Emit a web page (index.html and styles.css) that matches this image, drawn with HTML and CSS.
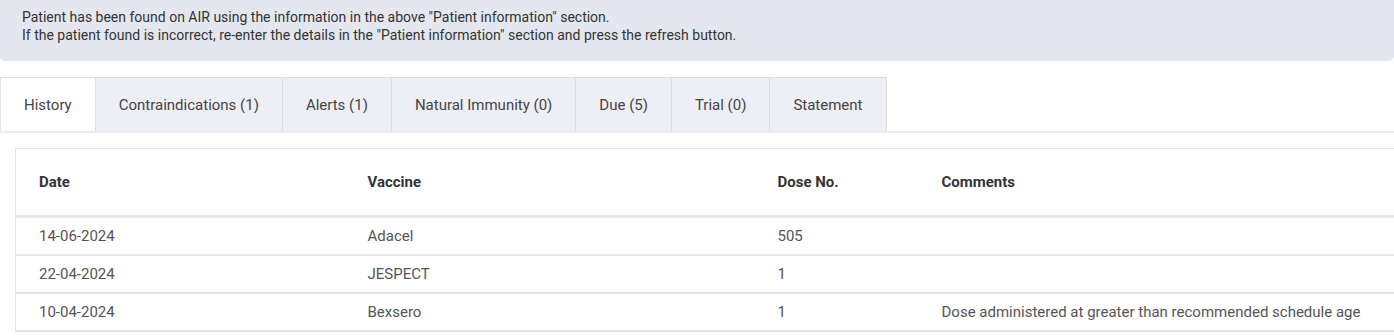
FILE: index.html
```html
<!DOCTYPE html>
<html lang="en">
<head>
<meta charset="UTF-8" />
<meta name="viewport" content="width=device-width, initial-scale=1" />
<title>AIR - Immunisation History</title>
<link rel="stylesheet" href="styles.css">
</head>
<body>
  <div class="notice" role="status">
    <p>Patient has been found on AIR using the information in the above "Patient information" section.</p>
    <p>If the patient found is incorrect, re-enter the details in the "Patient information" section and press the refresh button.</p>
  </div>

  <div class="tabs" role="tablist">
    <button class="tab active" role="tab" aria-selected="true">History</button>
    <button class="tab" role="tab">Contraindications (1)</button>
    <button class="tab" role="tab">Alerts (1)</button>
    <button class="tab" role="tab">Natural Immunity (0)</button>
    <button class="tab" role="tab">Due (5)</button>
    <button class="tab" role="tab">Trial (0)</button>
    <button class="tab" role="tab">Statement</button>
  </div>

  <div class="tab-panel" role="tabpanel">
    <table class="history">
      <colgroup>
        <col class="col-date">
        <col class="col-vaccine">
        <col class="col-dose">
        <col>
      </colgroup>
      <thead>
        <tr>
          <th>Date</th>
          <th>Vaccine</th>
          <th>Dose No.</th>
          <th>Comments</th>
        </tr>
      </thead>
      <tbody>
        <tr>
          <td>14-06-2024</td>
          <td>Adacel</td>
          <td>505</td>
          <td></td>
        </tr>
        <tr>
          <td>22-04-2024</td>
          <td>JESPECT</td>
          <td>1</td>
          <td></td>
        </tr>
        <tr>
          <td>10-04-2024</td>
          <td>Bexsero</td>
          <td>1</td>
          <td>Dose administered at greater than recommended schedule age</td>
        </tr>
      </tbody>
    </table>
  </div>
</body>
</html>
```

FILE: styles.css
```css
/* Dasar */
* {margin: 0; padding: 0; box-sizing: border-box;}
body {
  font-family: Roboto, 'Liberation Sans', Arial, sans-serif;
  background: #fff;
  color: #333;
  overflow: hidden;
}

/* Pesan di atas */
.notice {
  background: #e4e7f0;
  border-radius: 0 0 5px 5px;
  padding: 8px 22px 17px;
  font-size: 14px;
  line-height: 18px;
  color: #333;
}

/* Tab */
.tabs {
  display: flex;
  margin-top: 16px;
  border-bottom: 2px solid #ececec;
}
.tab {
  height: 54px;
  padding: 0 23px;
  background: #eeeff6;
  border: 1px solid #dedede;
  border-left: none;
  border-bottom: none;
  font-family: inherit;
  font-size: 15px;
  color: #444;
  cursor: pointer;
}
.tab:first-child {
  border-left: 1px solid #e6e6e6;
}
.tab.active {
  background: #fff;
}

/* Tabel riwayat */
.tab-panel {
  padding: 15px 0 0 15px;
}
.history {
  width: 100%;
  table-layout: fixed;
  border-collapse: collapse;
  border-top: 1px solid #e6e6e6;
  border-left: 1px solid #e6e6e6;
  font-size: 15px;
}
.col-date {width: 329px;}
.col-vaccine {width: 410px;}
.col-dose {width: 164px;}
.history th {
  height: 68px;
  padding: 0 23px;
  text-align: left;
  font-weight: 700;
  color: #333;
  border-bottom: 3px solid #e6e6e6;
}
.history td {
  height: 38px;
  padding: 0 23px;
  color: #555;
  border-bottom: 2px solid #e6e6e6;
  white-space: nowrap;
}
```
